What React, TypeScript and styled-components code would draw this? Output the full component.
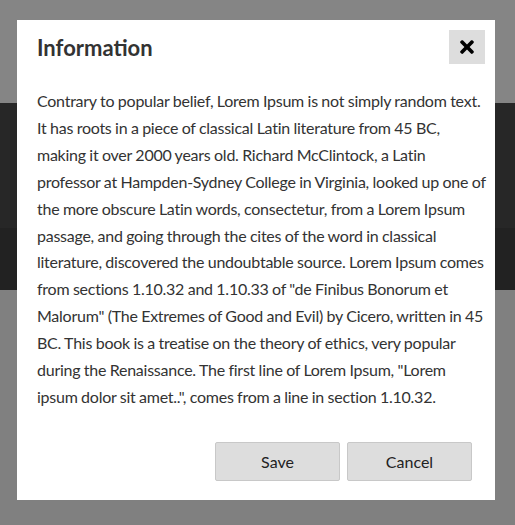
import React from 'react';
import styled, { createGlobalStyle } from 'styled-components';
import { FaTimes } from 'react-icons/fa';

const GlobalStyle = createGlobalStyle`
  html, body {
    margin: 0;
    padding: 0;
    height: 100%;
    background: #808080;
  }
  #root {
    height: 100%;
  }
`

const Page = styled.div`
  position: relative;
  height: 100%;
  display: flex;
  flex-direction: column;
`

const Band = styled.div<{ $h?: number; $bg: string }>`
  background: ${(p) => p.$bg};
  ${(p) => (p.$h ? `height: ${p.$h}px;` : 'flex: 1;')}
`

const Overlay = styled.div`
  position: absolute;
  inset: 0;
  display: flex;
  align-items: flex-start;
  padding: 20px 0 0 17px;
`

const Modal = styled.div`
  width: 478px;
  height: 480px;
  background: #fff;
  display: flex;
  flex-direction: column;
  font-family: Lato, 'Open Sans', sans-serif;
  color: #333;
`

const Header = styled.div`
  display: flex;
  align-items: center;
  justify-content: space-between;
  padding: 10px 10px 0 20px;
`

const Title = styled.h2`
  margin: 0;
  font-size: 22px;
  font-weight: 700;
  color: #333;
`

const CloseButton = styled.button`
  width: 36px;
  height: 34px;
  border: none;
  background: #dddddd;
  display: flex;
  align-items: center;
  justify-content: center;
  padding: 0;
  color: #000;
  cursor: pointer;
`

const Body = styled.p`
  margin: 0;
  padding: 24px 8px 0 20px;
  font-size: 16px;
  letter-spacing: -0.25px;
  word-spacing: -0.3px;
  line-height: 26.9px;
`

const Line = styled.span`
  display: block;
  white-space: nowrap;
`

const Footer = styled.div`
  display: flex;
  justify-content: flex-end;
  gap: 7px;
  padding: 0 23px 0 0;
  margin-top: auto;
  margin-bottom: 19px;
`

const Button = styled.button`
  width: 125px;
  height: 39px;
  background: #dddddd;
  border: 1px solid #c8c8c8;
  border-radius: 2px;
  font-family: Lato, 'Open Sans', sans-serif;
  font-size: 16px;
  color: #222;
  cursor: pointer;
`

const LINES = [
  'Contrary to popular belief, Lorem Ipsum is not simply random text.',
  'It has roots in a piece of classical Latin literature from 45 BC,',
  'making it over 2000 years old. Richard McClintock, a Latin',
  'professor at Hampden-Sydney College in Virginia, looked up one of',
  'the more obscure Latin words, consectetur, from a Lorem Ipsum',
  'passage, and going through the cites of the word in classical',
  'literature, discovered the undoubtable source. Lorem Ipsum comes',
  'from sections 1.10.32 and 1.10.33 of "de Finibus Bonorum et',
  'Malorum" (The Extremes of Good and Evil) by Cicero, written in 45',
  'BC. This book is a treatise on the theory of ethics, very popular',
  'during the Renaissance. The first line of Lorem Ipsum, "Lorem',
  'ipsum dolor sit amet..", comes from a line in section 1.10.32.',
]

const App = () => {
  return (
    <>
      <GlobalStyle />
      <Page>
        <Band $h={103} $bg="#858585" />
        <Band $h={125} $bg="#272727" />
        <Band $h={62} $bg="#222222" />
        <Band $bg="#808080" />
        <Overlay>
          <Modal>
            <Header>
              <Title>Information</Title>
              <CloseButton aria-label="Close">
                <FaTimes size={20} />
              </CloseButton>
            </Header>
            <Body>
              {LINES.map((line, i) => (
                <Line key={i}>{line} </Line>
              ))}
            </Body>
            <Footer>
              <Button>Save</Button>
              <Button>Cancel</Button>
            </Footer>
          </Modal>
        </Overlay>
      </Page>
    </>
  )
}

export default App;
